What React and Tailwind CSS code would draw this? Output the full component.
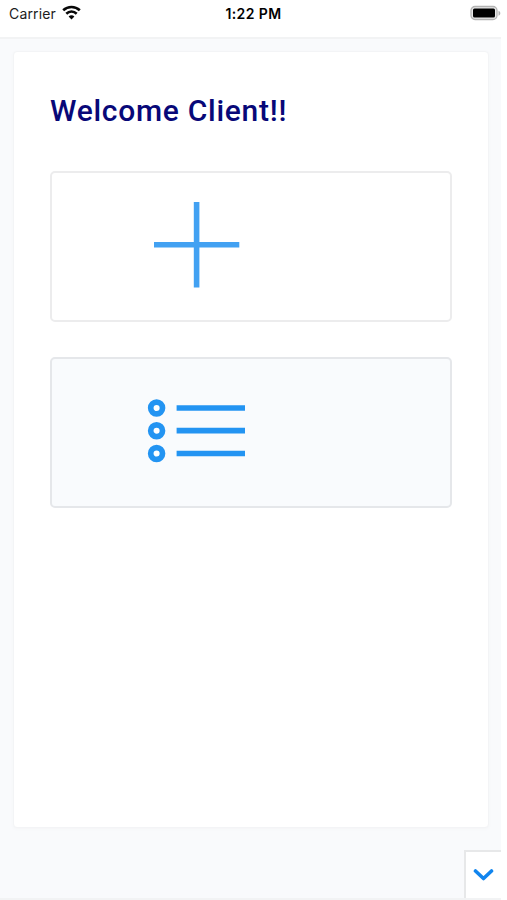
function StatusBar() {
  return (
    <header className="grid h-[37px] grid-cols-[1fr_auto_1fr] items-start bg-white font-['Inter','Liberation_Sans',sans-serif] text-[14px] leading-[28px] text-[#1c1c1c]">
      <div className="flex items-start pl-[9px]">
        <span className="w-[53px] whitespace-nowrap tracking-[0.15px]">Carrier</span>
        <svg className="mt-[5px] h-[15px] w-[19px]" viewBox="0 0 19 15" fill="none" stroke="#080808" strokeWidth="2.6">
          <path d="M1.2 5.3C5.9.8 13.1.8 17.8 5.3" />
          <path d="M4.3 8.7c3-2.9 7.4-2.9 10.4 0" />
          <path d="M6.6 11.5c1.7-1.6 4.1-1.6 5.8 0L9.5 14.5Z" fill="#080808" stroke="none" />
        </svg>
      </div>
      <span className="translate-x-[3px] text-[14px] font-semibold tracking-[0.4px] text-black">1:22 PM</span>
      <div className="flex justify-end">
        <svg className="mt-[5px] h-[16px] w-[31px]" viewBox="0 0 31 16">
          <rect x="1" y="1.5" width="26" height="13" rx="4" fill="#e8e8e8" stroke="#b3b3b3" strokeWidth="1.3" />
          <rect x="3" y="3.6" width="22" height="8.8" rx="1.5" fill="#000" />
          <path d="M28.5 5.8c2.4.7 2.4 4.3 0 5Z" fill="#b0b0b0" />
        </svg>
      </div>
    </header>
  );
}

function PlusIcon() {
  return (
    <svg className="mb-[3px] ml-[102px] h-[86px] w-[86px]" viewBox="0 0 86 86" stroke="#42a1f2" strokeWidth="5.6">
      <path d="M0 42.7h85.3M42.6 0v85.5" />
    </svg>
  );
}

function ListIcon() {
  return (
    <svg className="mb-[3px] ml-[95px] h-[64px] w-[98px]" viewBox="0 0 98 64" fill="none" stroke="#2394f2" strokeWidth="5.7">
      {[9, 31.7, 54.5].map((y) => (
        <g key={y}>
          <circle cx="9.6" cy={y} r="5.9" fill="#fff" />
          <path d={`M29.6 ${y}H98`} />
        </g>
      ))}
    </svg>
  );
}

export default function App() {
  return (
    <div className="h-[900px] w-[507px] overflow-hidden bg-white">
      <div className="flex h-full w-[501px] flex-col">
        <StatusBar />
        <main className="flex flex-1 flex-col border-y-2 border-[#f2f3f4] bg-[#f9fafc] pt-[12px]">
          <section className="ml-[13px] h-[777px] w-[476px] rounded-[4px] border border-[#f3f4f6] bg-white px-[36px] shadow-[0_1px_3px_#f4f5f6]">
            <h1 className="mt-[38px] h-[42px] whitespace-nowrap font-['Roboto',sans-serif] text-[30px] font-medium leading-[42px] tracking-[0.72px] text-[#080878]">
              Welcome Client!!
            </h1>
            <button className="mt-[39px] flex h-[151px] w-[402px] items-center rounded-[5px] border-2 border-[#ececed] bg-white">
              <PlusIcon />
            </button>
            <button className="mt-[35px] flex h-[151px] w-[402px] items-center rounded-[5px] border-2 border-[#e5e7ea] bg-[#f9fbfd]">
              <ListIcon />
            </button>
          </section>
          <button className="ml-auto mt-auto flex h-[48px] w-[37px] items-start justify-center border-l-2 border-t-2 border-[#e7e8e9] bg-white pt-[16px]">
            <svg className="h-[14px] w-[21px]" viewBox="0 0 21 14" fill="none" stroke="#1185ee" strokeWidth="3.6" strokeLinecap="round" strokeLinejoin="round">
              <path d="M2.5 3 10.5 10.5 18.5 3" />
            </svg>
          </button>
        </main>
      </div>
    </div>
  );
}
